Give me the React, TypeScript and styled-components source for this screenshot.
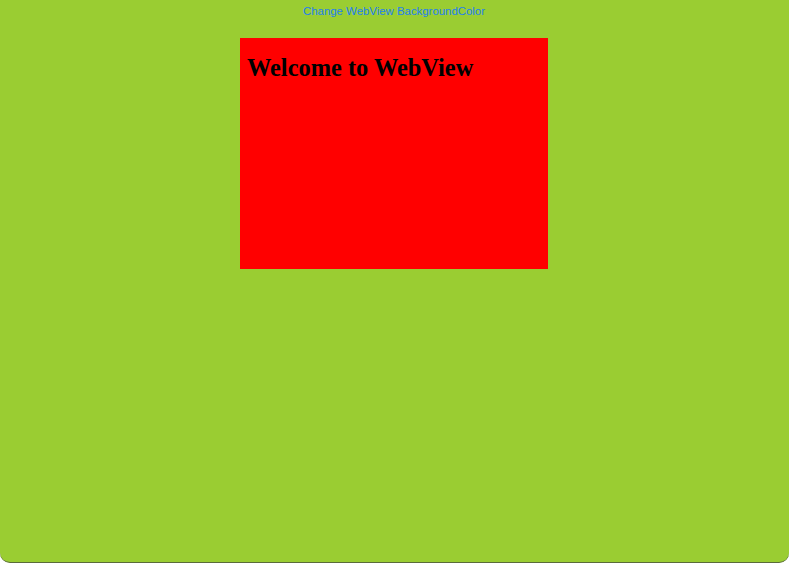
import React from "react";
import styled, { createGlobalStyle } from "styled-components";

const GlobalStyle = createGlobalStyle`
  html, body {
    margin: 0;
    padding: 0;
    background: #ffffff;
  }
  body {
    width: 789px;
    height: 563px;
    overflow: hidden;
  }
`;

const Window = styled.div`
  box-sizing: border-box;
  width: 789px;
  height: 563px;
  padding-right: 1px;
  background-color: #9acd32;
  border-radius: 0 0 10px 10px;
  border-bottom: 1px solid #5a6b3a;
  display: flex;
  flex-direction: column;
  align-items: center;
`;

const ColorButton = styled.button`
  margin-top: 4px;
  padding: 0;
  border: none;
  background: transparent;
  color: #1f7ff0;
  font-family: "Liberation Sans", Arial, sans-serif;
  font-size: 11.4px;
  line-height: 14px;
  cursor: pointer;
`;

const WebViewBox = styled.div<{ bg: string }>`
  box-sizing: border-box;
  margin-top: 20px;
  width: 308px;
  height: 231px;
  background-color: ${(props) => props.bg};
  padding: 16px 7px;
`;

const Heading = styled.h1`
  margin: 0;
  font-family: "Liberation Serif", "Times New Roman", serif;
  font-size: 24.4px;
  font-weight: 700;
  color: #000;
  line-height: normal;
`;

const App = () => {
  const [bg, setBg] = React.useState("#ff0000");

  return (
    <>
      <GlobalStyle />
      <Window>
        <ColorButton onClick={() => setBg(bg === "#ff0000" ? "#00aaff" : "#ff0000")}>
          Change WebView BackgroundColor
        </ColorButton>
        <WebViewBox bg={bg}>
          <Heading>Welcome to WebView</Heading>
        </WebViewBox>
      </Window>
    </>
  );
};

export default App;
